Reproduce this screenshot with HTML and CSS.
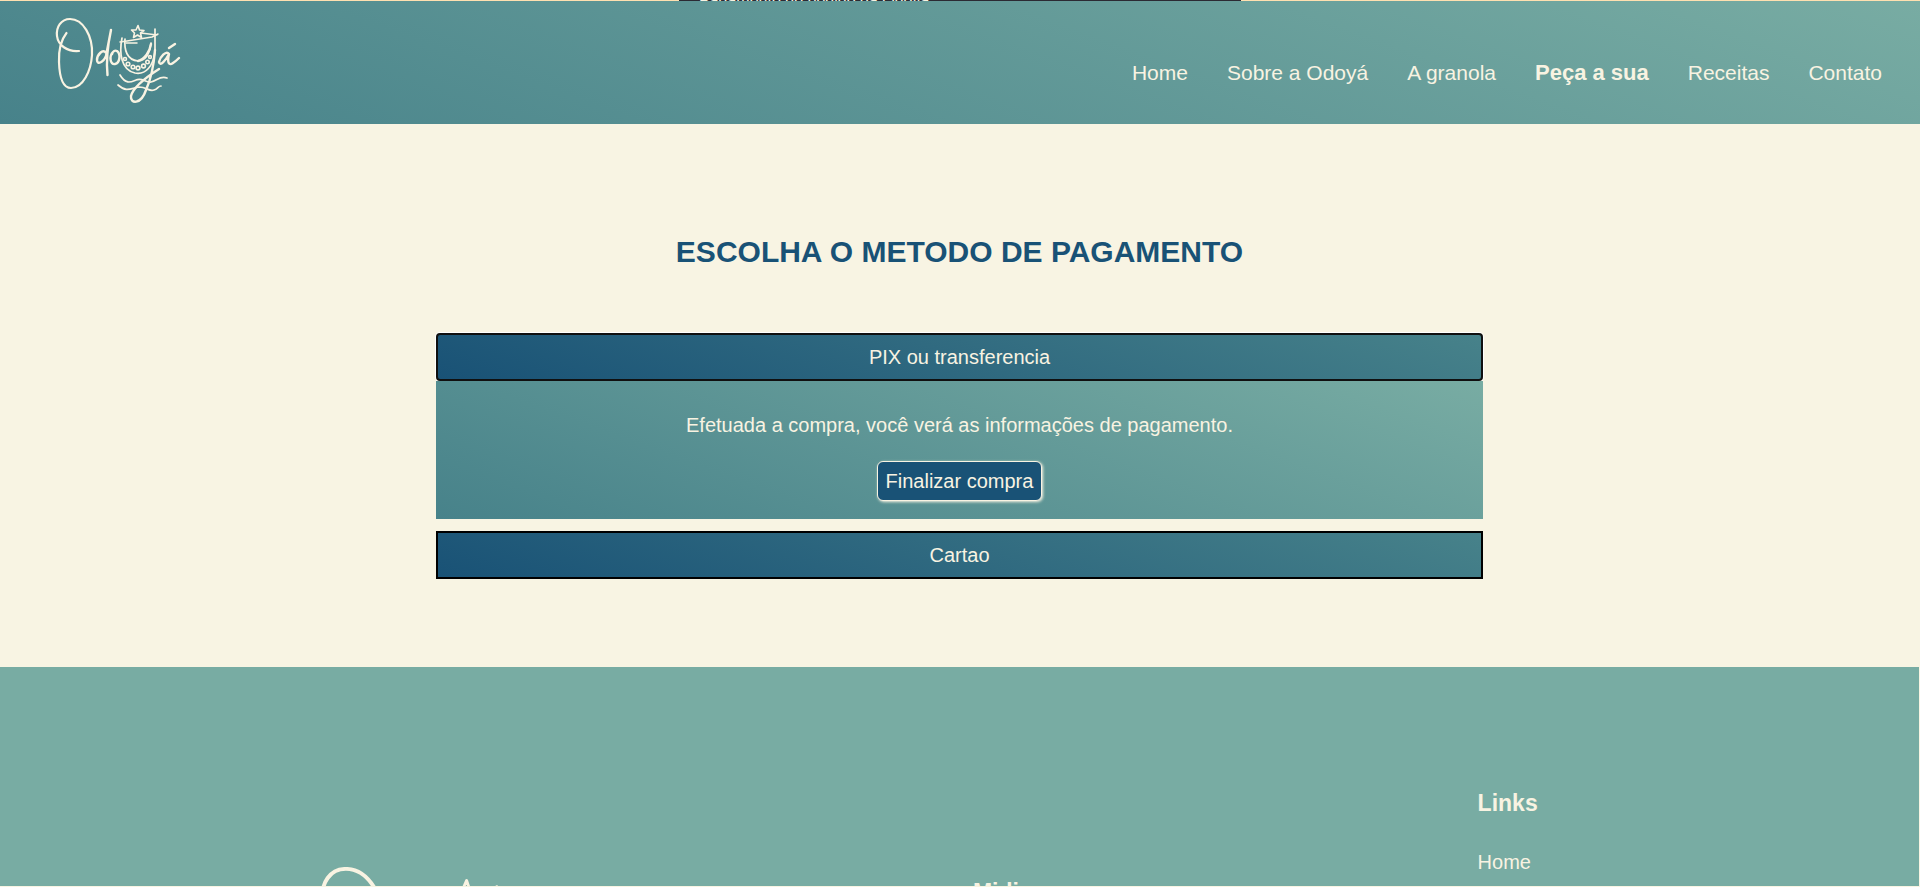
FILE: index.html
```html
<!DOCTYPE html>
<html lang="pt-BR">
<head>
<meta charset="utf-8">
<title>Odoyá - Pagamento</title>
<link rel="stylesheet" href="styles.css">
</head>
<body>
<div class="browser-edge"><span class="tab-strip">Pagamento do pedido da Odoyá</span></div>
<header class="header">
  <a class="brand" href="#" aria-label="Odoyá">
    <svg class="logo" viewBox="0 0 160 130">
      <g id="logo-art" fill="none" stroke="#f9f3e2" stroke-linecap="round" stroke-linejoin="round">
        <path stroke-width="2.200" d="M26.500 33C21 40 18.500 50 19 62C19.500 78 23.500 88 31 88C43 88 51 71 52 55C53 36 43 19 30 19C21 19 16 27 17 36C18 45 27 52 39 51"/>
        <path stroke-width="2.400" d="M66 53C63 48 57 55 57 60C57 65 63 63 66 56L71 30C68 44 66 61 67.500 75M73 52C69 56 70 65 75 64C80 63 81 54 77 51C75 50 73 51 72 54"/>
        <path stroke-width="1.700" d="M82 38C79 53 81 70 95 73C106 75 113 66 115 52L115 29M85 39C84 50 87 60 98 61C107 61 110 51 111 43"/>
        <path stroke-width="1.500" d="M80 42L87 41L112 37L118 34M86 43L97 43M101 33L117 35"/>
        <path stroke-width="1.600" d="M98 25.500L99.500 30L104 30.500L100.500 33L101.500 37.500L97.500 35L93.500 37.500L94.500 33L91.500 30L96 30Z"/>
        <path stroke-width="2.400" d="M111 44C110 51 105 59 98 61M115 50C114 63 111 79 106 90C101 105 90 104 91 96C93 88 105 78 119 69"/>
        <path stroke-width="2.400" d="M129 54C126 50 120 57 119 62C120 67 126 60 129 54C127 63 129 66 133 63C136 61 138 59 139 58M129 48L135 44"/>
        <path stroke-width="1.700" d="M80 75C86 85 91 82 96 80C102 77 106 83 111 82C117 81 120 75 127 78M78 85C87 93 91 88 99 87C107 87 109 92 114 90C118 89 118 86 121 86"/>
        <g stroke-width="1.600"><circle cx="85" cy="59" r="1.500"/><circle cx="88" cy="64" r="1.800"/><circle cx="93" cy="67" r="1.800"/><circle cx="98" cy="68" r="1.900"/><circle cx="103.500" cy="66" r="1.900"/><circle cx="107.500" cy="62" r="1.700"/><circle cx="110" cy="57" r="1.400"/></g>
      </g>
    </svg>
  </a>
  <nav class="nav">
    <a href="#">Home</a><a href="#">Sobre a Odoyá</a><a href="#">A granola</a><a class="active" href="#">Peça a sua</a><a href="#">Receitas</a><a href="#">Contato</a>
  </nav>
</header>
<main class="main">
  <h1 class="title">ESCOLHA O METODO DE PAGAMENTO</h1>
  <div class="accordion">
    <section>
      <button class="option selected" type="button" aria-expanded="true">PIX ou transferencia</button>
      <div class="panel">
        <p>Efetuada a compra, você verá as informações de pagamento.</p>
        <button class="finish" type="button">Finalizar compra</button>
      </div>
    </section>
    <section>
      <button class="option" type="button" aria-expanded="false">Cartao</button>
    </section>
  </div>
</main>
<footer class="footer">
  <div class="footer-brand">
    <svg class="footer-logo" viewBox="16 18 125 86"><use href="#logo-art"/></svg>
  </div>
  <div class="footer-media"><h2>Midias</h2></div>
  <div class="footer-links"><h2>Links</h2><a href="#">Home</a></div>
</footer>
</body>
</html>
```
FILE: styles.css
```css
* { box-sizing: border-box; }

body {
  margin: 0;
  height: 100vh;
  display: flex;
  flex-direction: column;
  overflow: hidden;
  border-bottom: 1px solid #f8f4e3;
  background: #f8f4e3;
  color: #f8f3e2;
  font: 20px/24px "Liberation Sans", Arial, sans-serif;
}

a { color: inherit; text-decoration: none; }

.browser-edge {
  flex: none;
  display: flex;
  justify-content: center;
  height: 1px;
  overflow: hidden;
  background: #ffe0b0;
}

.tab-strip {
  width: 562px;
  padding-left: 20px;
  background: #2b2a33;
  font-size: 16px;
  line-height: 1px;
}

.header {
  flex: none;
  display: flex;
  justify-content: space-between;
  align-items: center;
  padding-right: 38px;
  background: linear-gradient(20deg, #47828a, #78aca3);
}

.brand { display: block; height: 123px; padding-left: 40px; }

.logo { display: block; width: 160px; height: 130px; margin-top: -1px; }

.nav { display: flex; align-items: center; gap: 39px; margin-top: 20px; font-size: 21px; }

.nav .active { font-size: 22px; font-weight: bold; }

.main {
  flex: none;
  display: flex;
  flex-direction: column;
  align-items: center;
  padding: 110px 21px 88px 20px;
}

.title { margin: 0 0 63px; font-size: 30px; line-height: 36px; color: #195276; }

.accordion {
  display: flex;
  flex-direction: column;
  gap: 12px;
  width: 1047px;
  max-width: 100%;
}

.option {
  display: block;
  width: 100%;
  height: 48px;
  padding: 0;
  border: 2px solid #000;
  background: linear-gradient(20deg, #195276, #47828a);
  color: inherit;
  font: inherit;
}

.option.selected {
  border-color: #101010;
  border-radius: 4px;
  box-shadow: 0 0 0 1px #fff;
}

.panel {
  position: relative;
  display: flex;
  flex-direction: column;
  align-items: center;
  padding: 32px 20px 18px;
  background: linear-gradient(20deg, #47828a, #78aca3);
}

.panel p { margin: 0 0 24px; }

.finish {
  height: 40px;
  padding: 0 8px;
  border: 1px solid #f8f3e2;
  border-radius: 6px;
  background: #195276;
  box-shadow: 1px 1px 3px #f8f3e2;
  color: inherit;
  font: inherit;
}

.footer {
  flex: 1;
  min-height: 0;
  overflow: hidden;
  display: grid;
  grid-template-columns: 50.7% 26.3% 1fr;
  margin-right: 1px;
  background: #78aca3;
}

.footer h2 { margin: 0; font-size: 23px; line-height: 28px; }

.footer-brand { padding: 200px 0 0 33%; }

.footer-logo { display: block; width: 222px; height: 153px; }

.footer-media { padding-top: 211px; }

.footer-links { display: flex; flex-direction: column; gap: 33px; padding-top: 122px; }
```
